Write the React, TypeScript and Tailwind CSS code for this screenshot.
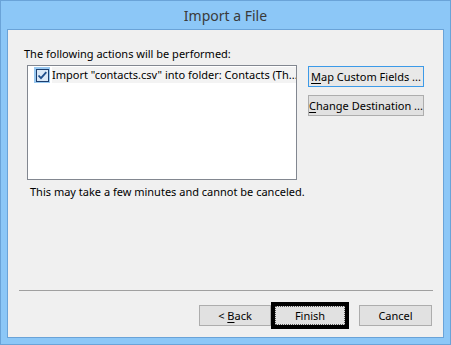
import React from "react";

const font = "font-['Noto_Sans',sans-serif]";

function CheckBox() {
  return (
    <span className="flex h-[16px] w-[16px] shrink-0 items-center justify-center bg-[#99c9f1]">
      <svg width="13" height="13" viewBox="0 0 13 13">
        <rect x="0.5" y="0.5" width="12" height="12" fill="#dbe9f7" stroke="#1c3e6e" />
        <path d="M2.5 6.5 L5 9.2 L10.3 3.2" fill="none" stroke="#1f4f8c" strokeWidth="1.8" />
      </svg>
    </span>
  );
}

function SideButton({ first, rest, focused }: { first: string; rest: string; focused?: boolean }) {
  return (
    <div
      className={`flex h-[21px] w-[116px] items-center justify-center whitespace-nowrap border text-black ${
        focused ? "border-[#3c9ae8] bg-[#e8e8e8]" : "border-[#adadad] bg-[#e1e1e1]"
      }`}
    >
      <span>
        <span className="underline underline-offset-2">{first}</span>
        {rest}
      </span>
    </div>
  );
}

export default function App() {
  return (
    <div className={`flex h-[345px] w-[451px] flex-col border border-[#6aa3d8] bg-[#8cc7f7] ${font}`}>
      <div className="flex h-[28px] items-center justify-center pt-[1px] text-[14px] text-[#3a3a3a]">
        Import a File
      </div>

      <div className="mx-[6px] mb-[6px] flex flex-1 flex-col border border-[#6aa3d8] bg-[#f0f0f0] text-[11px] leading-[16px] text-black">
        <p className="ml-[16px] mt-[16px]">The following actions will be performed:</p>

        <div className="ml-[19px] mt-[3px] flex">
          <div className="h-[115px] w-[270px] overflow-hidden border border-[#828790] bg-white pl-[6px] pt-[1px]">
            <div className="flex items-center gap-[2px]">
              <CheckBox />
              <span className="whitespace-nowrap bg-[#f3f3f3] pr-[2px]">
                Import "contacts.csv" into folder: Contacts (Th...
              </span>
            </div>
          </div>

          <div className="ml-[11px] mt-[1px] flex flex-col gap-[8px]">
            <SideButton first="M" rest="ap Custom Fields ..." focused />
            <SideButton first="C" rest="hange Destination ..." />
          </div>
        </div>

        <p className="ml-[22px] mt-[4px]">This may take a few minutes and cannot be canceled.</p>

        <div className="ml-[11px] mr-[10px] mt-auto h-[1px] bg-[#a0a0a0]" />

        <div className="mb-[8px] mr-[11px] mt-[11px] flex items-center justify-end">
          <div className="flex h-[21px] w-[72px] items-center justify-center border border-[#adadad] bg-[#e1e1e1]">
            &lt;&nbsp;<span className="underline underline-offset-2">B</span>ack
          </div>
          <div className="h-[27px] w-[78px] border-4 border-black bg-[#e1e1e1]">
            <div className="flex h-full w-full items-center justify-center border border-dotted border-[#555]">
              Finish
            </div>
          </div>
          <div className="ml-[10px] flex h-[21px] w-[73px] items-center justify-center border border-[#adadad] bg-[#e1e1e1]">
            Cancel
          </div>
        </div>
      </div>
    </div>
  );
}
